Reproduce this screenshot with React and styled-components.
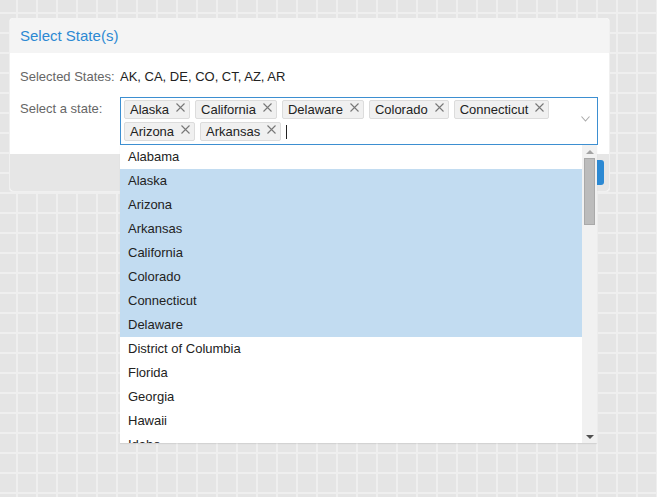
import React from "react";
import styled, { createGlobalStyle } from "styled-components";

const Global = createGlobalStyle`
  html, body { margin: 0; padding: 0; }
  body {
    width: 657px;
    height: 497px;
    overflow: hidden;
    background-color: #e5e5e5;
    background-image:
      linear-gradient(to right, #efefef 2px, transparent 2px),
      linear-gradient(to bottom, #efefef 2px, transparent 2px);
    background-size: 20px 20px;
    background-position: 16px 12px;
    font-family: "Liberation Sans", Arial, sans-serif;
    font-size: 13px;
    color: #222;
  }
`;

const Panel = styled.div`
  margin: 18px 0 0 9px;
  width: 599px;
  border: 1px solid #f0f0f0;
  border-top: none;
  border-radius: 4px;
  background: #fff;
`;

const Header = styled.div`
  height: 35px;
  background: #f4f4f4;
  border-radius: 4px 4px 0 0;
  padding-left: 10px;
  display: flex;
  align-items: center;
  font-size: 15px;
  color: #2c89d3;
`;

const Body = styled.div`
  padding: 16px 0 9px 10px;
  display: grid;
  grid-template-columns: 100px 478px;
  row-gap: 12px;
  align-items: start;
`;

const Label = styled.div`
  color: #666;
  line-height: 16px;
  padding-top: ${(p) => p.$pt || 0}px;
`;

const Value = styled.div`
  line-height: 16px;
  color: #222;
`;

const SelectWrap = styled.div`
  position: relative;
`;

const SelectBox = styled.div`
  box-sizing: border-box;
  width: 478px;
  height: 48px;
  border: 1px solid #3d8fd1;
  padding: 2px 30px 0 3px;
  display: flex;
  flex-wrap: wrap;
  align-content: flex-start;
  column-gap: 5px;
  row-gap: 3px;
`;

const Tag = styled.div`
  box-sizing: border-box;
  height: 19px;
  display: flex;
  align-items: center;
  gap: 7px;
  padding: 0 4px 0 5px;
  background: #f0f0f0;
  border: 1px solid #dcdcdc;
  border-radius: 2px;
  color: #222;
  font-size: 13px;
`;

const Remove = styled.svg`
  width: 9px;
  height: 9px;
  margin-top: -4px;
  stroke: #777;
  stroke-width: 1.1;
`;

const Caret = styled.div`
  width: 1px;
  height: 14px;
  background: #222;
  align-self: center;
`;

const Chevron = styled.svg`
  position: absolute;
  right: 8px;
  top: 19px;
  width: 9px;
  height: 6px;
  fill: none;
  stroke: #aaa;
  stroke-width: 1.1;
`;

const Dropdown = styled.div`
  position: absolute;
  left: 0;
  top: 48px;
  width: 477px;
  height: 298px;
  display: flex;
  background: #fff;
  overflow: hidden;
  box-shadow: 0 1px 1px rgba(0, 0, 0, 0.08);
  z-index: 5;
`;

const OptionList = styled.ul`
  flex: 1;
  margin: 0;
  padding: 0;
  list-style: none;
  overflow: hidden;
`;

const Option = styled.li`
  height: 24px;
  line-height: 24px;
  padding-left: 8px;
  background: ${(p) => (p.$selected ? "#c2dcf1" : "#fff")};
  color: #222;
  white-space: nowrap;
`;

const ScrollTrack = styled.div`
  width: 15px;
  background: #f1f1f1;
  display: flex;
  flex-direction: column;
  align-items: center;
`;

const ArrowBox = styled.div`
  height: 13px;
  width: 15px;
  display: flex;
  align-items: center;
  justify-content: center;
`;

const Arrow = styled.div`
  width: 0;
  height: 0;
  border-left: 4px solid transparent;
  border-right: 4px solid transparent;
  ${(p) =>
    p.$up
      ? `border-bottom: 4px solid #a3a3a3;`
      : `border-top: 4px solid #505050;`}
`;

const ThumbArea = styled.div`
  flex: 1;
  width: 100%;
  display: flex;
  justify-content: center;
`;

const Thumb = styled.div`
  box-sizing: border-box;
  width: 11px;
  background: #bcbcbc;
  border: 1px solid #a9a9a9;
`;

const Footer = styled.div`
  height: 37px;
  background: #e6e6e6;
  border-radius: 0 0 4px 4px;
  display: flex;
  justify-content: flex-end;
  align-items: center;
  padding-right: 5px;
`;

const Button = styled.button`
  height: 25px;
  padding: 0 14px;
  border: none;
  border-radius: 3px;
  background: #2c89d3;
  color: #fff;
  font-family: inherit;
  font-size: 13px;
`;

const STATES = [
  "Alabama", "Alaska", "Arizona", "Arkansas", "California", "Colorado",
  "Connecticut", "Delaware", "District of Columbia", "Florida", "Georgia",
  "Hawaii", "Idaho", "Illinois", "Indiana", "Iowa", "Kansas", "Kentucky",
  "Louisiana", "Maine", "Maryland", "Massachusetts", "Michigan", "Minnesota",
  "Mississippi", "Missouri", "Montana", "Nebraska", "Nevada", "New Hampshire",
  "New Jersey", "New Mexico", "New York", "North Carolina", "North Dakota",
  "Ohio", "Oklahoma", "Oregon", "Pennsylvania", "Rhode Island",
  "South Carolina", "South Dakota", "Tennessee", "Texas", "Utah", "Vermont",
  "Virginia", "Washington", "West Virginia", "Wisconsin", "Wyoming",
];

const SELECTED = ["Alaska", "California", "Delaware", "Colorado", "Connecticut", "Arizona", "Arkansas"];

const LIST_H = 298;
const ROW_H = 24;
const VISIBLE = Math.ceil(LIST_H / ROW_H);
const TRACK_H = LIST_H - 26;
const THUMB_H = Math.round((LIST_H / (STATES.length * ROW_H)) * TRACK_H) + 1;

function X() {
  return (
    <Remove viewBox="0 0 9 9">
      <path d="M0.5 0.5 L8.5 8.5 M8.5 0.5 L0.5 8.5" />
    </Remove>
  );
}

export default function App() {
  return (
    <>
      <Global />
      <Panel>
        <Header>Select State(s)</Header>
        <Body>
          <Label>Selected States:</Label>
          <Value>AK, CA, DE, CO, CT, AZ, AR</Value>
          <Label $pt={4}>Select a state:</Label>
          <SelectWrap>
            <SelectBox>
              {SELECTED.map((s) => (
                <Tag key={s}>
                  {s}
                  <X />
                </Tag>
              ))}
              <Caret />
            </SelectBox>
            <Chevron viewBox="0 0 9 6">
              <path d="M0.5 0.5 L4.5 5 L8.5 0.5" />
            </Chevron>
            <Dropdown>
              <OptionList>
                {STATES.slice(0, VISIBLE).map((s) => (
                  <Option key={s} $selected={SELECTED.includes(s)}>
                    {s}
                  </Option>
                ))}
              </OptionList>
              <ScrollTrack>
                <ArrowBox>
                  <Arrow $up />
                </ArrowBox>
                <ThumbArea>
                  <Thumb style={{ height: THUMB_H }} />
                </ThumbArea>
                <ArrowBox>
                  <Arrow />
                </ArrowBox>
              </ScrollTrack>
            </Dropdown>
          </SelectWrap>
        </Body>
        <Footer>
          <Button>OK</Button>
        </Footer>
      </Panel>
    </>
  );
}
